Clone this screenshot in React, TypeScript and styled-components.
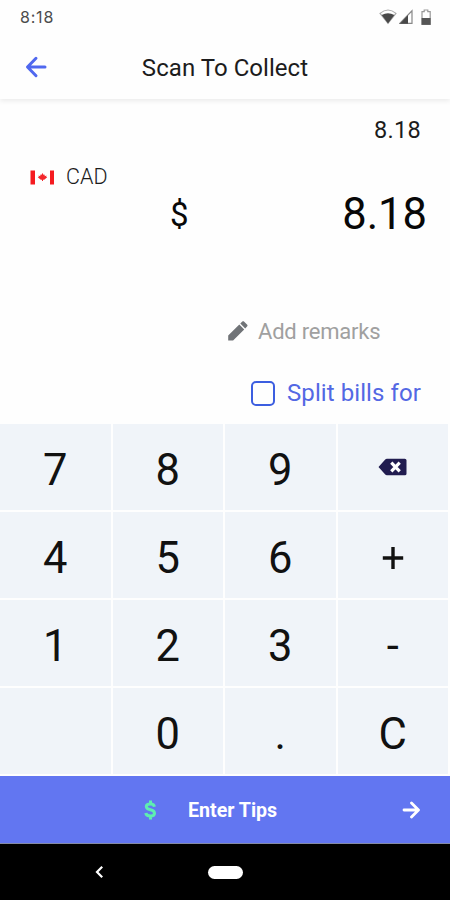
import React from "react";
import styled, { createGlobalStyle } from "styled-components";

const GlobalStyle = createGlobalStyle`
  * { box-sizing: border-box; }
  body { margin: 0; background: #fefefe; font-family: Roboto, "Liberation Sans", sans-serif; }
  svg { display: block; flex: none; }
`;

const Screen = styled.main`
  width: 450px;
  height: 900px;
  display: flex;
  flex-direction: column;
  overflow: hidden;
  background: #fefefe;
  color: #1c1c1c;
`;

const StatusBar = styled.div`
  height: 34px;
  display: flex;
  align-items: center;
  justify-content: space-between;
  padding: 0 18px 0 20px;
`;

const Clock = styled.span`
  font: 400 16px/20px Inter, sans-serif;
  letter-spacing: 0.8px;
  color: #4c4c4c;
`;

const StatusIcons = styled.div`
  display: grid;
  grid-template-columns: 20px 22px 11px;
  align-items: center;
`;

const Header = styled.header`
  height: 65px;
  display: grid;
  grid-template-columns: 75px 1fr 75px;
  align-items: center;
  clip-path: inset(0 0 -10px 0);
  box-shadow: 0 2px 5px rgba(0, 0, 0, 0.08);
`;

const BackButton = styled.button`
  border: 0;
  background: none;
  padding: 0 0 0 25px;
`;

const Title = styled.h1`
  margin: 3px 0 0;
  text-align: center;
  font-size: 24px;
  line-height: 28px;
  font-weight: 400;
  letter-spacing: 0.05px;
`;

const Amounts = styled.section`
  height: 325px;
  display: flex;
  flex-direction: column;
`;

const Subtotal = styled.div`
  padding: 17px 29px 0 0;
  text-align: right;
  font-size: 23.5px;
  line-height: 28px;
  font-weight: 400;
  letter-spacing: 0.3px;
`;

const Currency = styled.div`
  display: flex;
  align-items: center;
  gap: 11px;
  height: 28px;
  margin-top: 19px;
  padding-left: 30px;
  font-size: 21.5px;
  line-height: 28px;
  font-weight: 300;
`;

const TotalRow = styled.div`
  display: flex;
  align-items: center;
  justify-content: space-between;
  height: 50px;
  margin-top: -3px;
  padding: 1px 23px 0 170px;
  color: #080808;
`;

const Sign = styled.span`
  margin-top: 3px;
  font-size: 33px;
  line-height: 40px;
`;

const Total = styled.span`
  margin-top: 2px;
  font-size: 43.5px;
  line-height: 50px;
`;

const Remarks = styled.div`
  display: flex;
  align-items: center;
  gap: 8px;
  height: 28px;
  margin-top: 79px;
  padding-left: 226px;
  color: #a0a0a0;
  font-size: 22px;
  letter-spacing: -0.22px;
`;

const Split = styled.label`
  display: flex;
  align-items: center;
  gap: 12px;
  height: 30px;
  margin-top: 33px;
  padding-left: 251px;
  color: #5368e4;
  font-size: 24px;
  letter-spacing: 0.08px;
`;

const Checkbox = styled.span`
  width: 24px;
  height: 25px;
  border: 2px solid #3c5ee0;
  border-radius: 5px;
`;

const Keypad = styled.section`
  height: 352px;
  display: grid;
  grid-template-columns: repeat(4, 110.5px);
  grid-template-rows: repeat(4, 86px);
  gap: 2px;
`;

const Key = styled.button`
  display: flex;
  align-items: center;
  justify-content: center;
  border: 0;
  padding: 7px 0 0;
  background: #f0f4f9;
  color: #111;
  font: 400 43.5px/50px Roboto, sans-serif;
`;

const IconKey = styled(Key)<{ $drop?: number }>`
  padding: ${(p) => p.$drop ?? 0}px 0 0;
`;

const TipBar = styled.div`
  height: 68px;
  display: grid;
  grid-template-columns: 142px 46px 1fr 48px;
  align-items: center;
  background: #6276f1;
  border-bottom: 1px solid #858ba5;
  color: #fff;
  font-size: 19.6px;
  font-weight: 700;
`;

const TipDollar = styled.span`
  grid-column: 2;
`;

const TipLabel = styled.span`
  padding-top: 1px;
`;

const NavBar = styled.nav`
  height: 56px;
  display: grid;
  grid-template-columns: 208px 35px 1fr;
  align-items: center;
  background: #000;
`;

const NavBack = styled.span`
  padding-left: 94px;
`;

const HomePill = styled.span`
  height: 13px;
  border-radius: 7px;
  background: #fff;
`;

const WifiIcon = () => (
  <svg width="18" height="16" viewBox="0 0 18 16">
    <path d="M1 4.4Q9-2.4 17 4.4L9 14.4Z" fill="none" stroke="#aaa" strokeWidth="1.2" />
    <path d="M2.6 6Q9 2.6 15.4 6L9 14.4Z" fill="#484848" />
  </svg>
);

const SignalIcon = () => (
  <svg width="15" height="16" viewBox="0 0 15 16">
    <path d="M.8 14.4L13 1.8V14.4Z" fill="#fff" stroke="#888" strokeWidth="1.2" />
    <path d="M.8 14.8L9 6V14.8Z" fill="#484848" />
  </svg>
);

const BatteryIcon = () => (
  <svg width="11" height="17" viewBox="0 0 11 17">
    <path d="M3.2 2.6V1h3.6V2.6H9.2V15.5H1V2.6Z" fill="#fff" stroke="#999" strokeWidth="1.2" />
    <path d="M.6 9h9v6.8H.6Z" fill="#555" />
  </svg>
);

const BackArrow = () => (
  <svg width="23" height="22" viewBox="0 0 23 22" fill="none" stroke="#5068ef" strokeWidth="3" strokeLinecap="round" strokeLinejoin="round">
    <path d="M11 2.3L2.5 11L11 19.7M2.8 11H20" />
  </svg>
);

const CanadaFlag = () => (
  <svg width="25" height="15" viewBox="0 0 25 15">
    <path d="M.5 .5h4.5v14H.5zM20 .5h4v14h-4z" fill="#f51b20" />
    <path d="M12.5 3l1.2 2 1-.5v1.7l1.8-.8-.3 1.3 1 .5-3 2.5h-1.2V11h-1V9.7h-1.2l-3-2.5 1-.5-.3-1.3 1.8.8V4.5l1 .5z" fill="#f3272b" />
  </svg>
);

const Pencil = () => (
  <svg width="24" height="24" viewBox="0 0 24 24" fill="#707377">
    <path d="M2.2 16.6V21.5H7.1L18.2 10.4l-4.9-4.9zM21 7.6c.7-.7.7-1.4 0-2.1l-2.8-2.8c-.7-.6-1.4-.6-2.1 0l-1.8 1.8 4.9 4.9z" />
  </svg>
);

const Backspace = () => (
  <svg width="29" height="18" viewBox="0 0 29 18">
    <path d="M.5 9L7 1.7Q7.8 .8 9 .8H26.8Q28.5 .8 28.5 2.3V15.7Q28.5 17.2 26.8 17.2H9Q7.8 17.2 7 16.3Z" fill="#211c50" />
    <path d="M13.3 4.7l8.4 8.6M21.7 4.7l-8.4 8.6" stroke="#fff" strokeWidth="3.2" />
  </svg>
);

const PlusSign = () => (
  <svg width="22" height="24" viewBox="0 0 22 24" stroke="#111" strokeWidth="3.4">
    <path d="M11 1V23M.8 12H21.2" />
  </svg>
);

const Dollar = () => (
  <svg width="16" height="20" viewBox="0 0 16 20" fill="none" stroke="#5eeeb0" strokeWidth="3">
    <path d="M12.4 6.7Q12 4 8.5 4Q4.3 4 4.3 6.6Q4.3 8.9 8.4 9.7Q12.5 10.6 12.5 13.3Q12.5 16 8.5 16Q4.2 16 3.8 13M8.5 .4V4M8.5 16V19.6" />
  </svg>
);

const ForwardArrow = () => (
  <svg width="19" height="18" viewBox="0 0 19 18" fill="none" stroke="#fff" strokeWidth="2.8" strokeLinecap="round" strokeLinejoin="round">
    <path d="M9.5 1.9L16.5 9L9.5 16.1M2 9H16" />
  </svg>
);

const NavChevron = () => (
  <svg width="10" height="14" viewBox="0 0 10 14" fill="none" stroke="#fff" strokeWidth="2.2">
    <path d="M8.2 1.7L3 7L8.2 12.3" />
  </svg>
);

export default function App() {
  return (
    <>
      <GlobalStyle />
      <Screen>
        <StatusBar>
          <Clock>8:18</Clock>
          <StatusIcons>
            <WifiIcon />
            <SignalIcon />
            <BatteryIcon />
          </StatusIcons>
        </StatusBar>
        <Header>
          <BackButton aria-label="Back"><BackArrow /></BackButton>
          <Title>Scan To Collect</Title>
        </Header>
        <Amounts>
          <Subtotal>8.18</Subtotal>
          <Currency><CanadaFlag />CAD</Currency>
          <TotalRow>
            <Sign>$</Sign>
            <Total>8.18</Total>
          </TotalRow>
          <Remarks><Pencil />Add remarks</Remarks>
          <Split><Checkbox />Split bills for</Split>
        </Amounts>
        <Keypad>
          <Key>7</Key>
          <Key>8</Key>
          <Key>9</Key>
          <IconKey aria-label="Backspace"><Backspace /></IconKey>
          <Key>4</Key>
          <Key>5</Key>
          <Key>6</Key>
          <IconKey $drop={5} aria-label="Plus"><PlusSign /></IconKey>
          <Key>1</Key>
          <Key>2</Key>
          <Key>3</Key>
          <Key>-</Key>
          <Key aria-label="Blank" />
          <Key>0</Key>
          <Key>.</Key>
          <Key>C</Key>
        </Keypad>
        <TipBar>
          <TipDollar><Dollar /></TipDollar>
          <TipLabel>Enter Tips</TipLabel>
          <ForwardArrow />
        </TipBar>
        <NavBar>
          <NavBack><NavChevron /></NavBack>
          <HomePill />
        </NavBar>
      </Screen>
    </>
  );
}
